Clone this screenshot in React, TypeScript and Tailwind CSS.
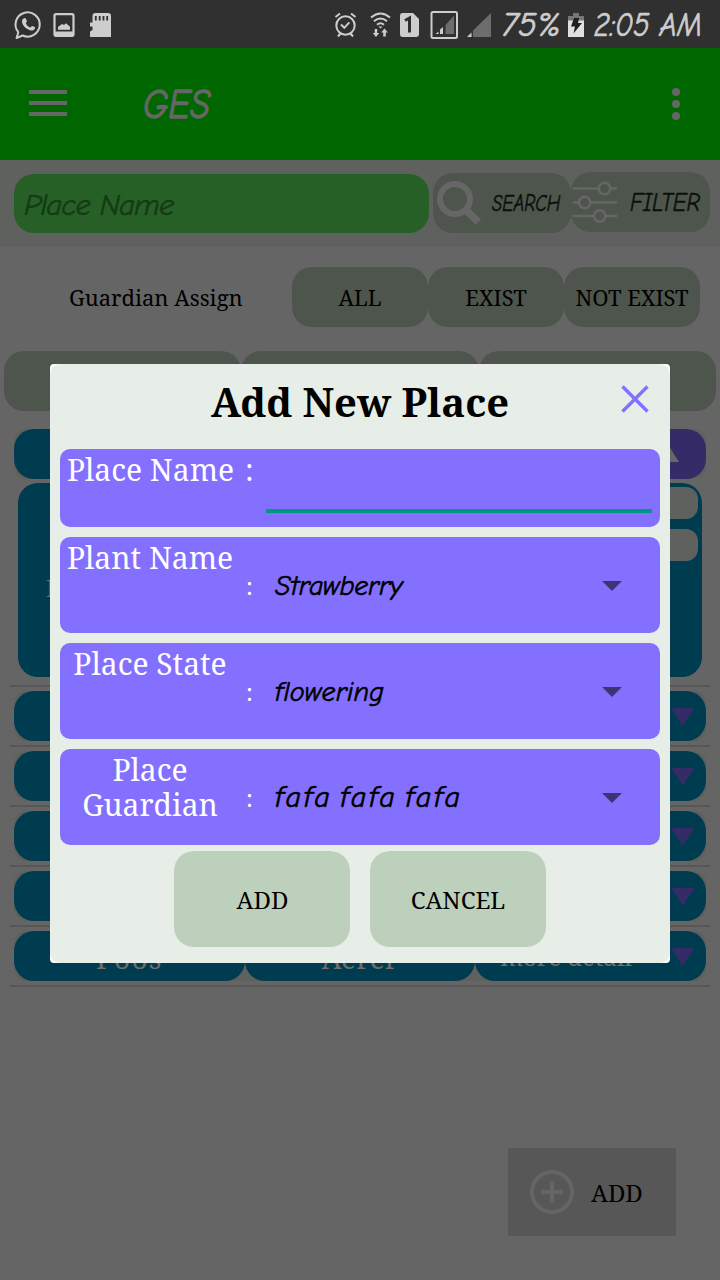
import type { ReactNode } from 'react';

const HAND = "font-['Comic_Neue','Lato',cursive] italic whitespace-nowrap";

function StatusBar() {
  return (
    <div className="flex h-12 shrink-0 items-center bg-[#303030] text-[#cdcdcd]">
      <svg width="118" height="48" viewBox="0 0 118 48" fill="none">
        <path d="M16.6 38 L18.3 32.2 A12.1 12.1 0 1 1 22.6 35.5 Z" stroke="currentColor" strokeWidth="2" strokeLinejoin="round" />
        <path d="M23.6 18.5c1.2-.9 1.9-.6 2.4.6l.9 2c.3.8-1.1 1.7-1 2.3.9 2 2.3 3.2 4.2 4 .8.1 1.4-1.7 2.2-1.5l2.3 1.1c.7.4.6 1 .2 1.8-.9 1.7-2.8 2.1-4.8 1.5-4.4-1.5-7.7-5.200-8-8.500 0-1.500.5-2.600 1.600-3.300Z" fill="currentColor" />
        <rect x="54.500" y="14.200" width="19" height="21.600" rx="1.500" stroke="currentColor" strokeWidth="2.200" />
        <path d="M54 31.500h20v4.500h-20zM58 29.800v-2.800l4-3 2 1 2-1.800 4 3.500v3.100z" fill="currentColor" />
        <path d="M92.500 16q0-3 3-3H108q3 0 3 3v21H90v-5.500l2.500-1.500v-3.500H90V22.500h2.500z" fill="currentColor" />
        <path d="M95.800 16v4.500M99.700 16v4.500M103.500 16v4.500M107.200 16v4.500" stroke="#303030" strokeWidth="1.800" />
      </svg>
      <svg className="ml-[212px]" width="170" height="48" viewBox="330 0 170 48" fill="none">
        <circle cx="345.500" cy="25.500" r="9.200" stroke="currentColor" strokeWidth="2" />
        <path d="m341 24.500 3.300 3.300 5-5.500M335.500 17l4.500-3.500M355.500 17 351 13.500M340.500 33.500 338 36.500M350.500 33.500l2.500 3" stroke="currentColor" strokeWidth="2" />
        <path d="M371 17.500q9.500-8 19 0M374 21.200q6.500-5.500 13 0M377 24.800q3.500-3 7 0" stroke="currentColor" strokeWidth="2" />
        <path d="M378.500 26.500h4l-2 2zM374.700 29h2.500v4h2l-3.200 4-3.300-4h2zM383.200 36.500h2.600v-4h2l-3.300-4-3.300 4h2z" fill="currentColor" />
        <path d="M402.500 13H413l6 6v15q0 3-3 3H402.500q-2.500 0-2.500-3V16q0-3 2.500-3Z" fill="currentColor" />
        <path d="M405 20.500 409.500 18v14.500" stroke="#303030" strokeWidth="3" />
        <rect x="431.500" y="12" width="25.500" height="26" rx="1.500" stroke="currentColor" strokeWidth="2" />
        <path d="M445.500 34V25L454 15.500V34z" fill="#6d6d6d" />
        <path d="M435.500 34l3-2.500V34zM440 34v-4.500l3-2.500v7z" fill="currentColor" />
        <path d="M473 37V30.500L491 13V37z" fill="#6d6d6d" />
        <path d="M467 37l4.500-4.500V37z" fill="currentColor" />
      </svg>
      <div className="flex w-[68px] shrink-0 pl-0.5">
        <span className={`${HAND} pt-0.5 text-[34px] leading-[48px] [-webkit-text-stroke:0.7px]`}>75%</span>
      </div>
      <svg width="16" height="48" viewBox="0 0 16 48">
        <path d="M0 16h5v-3h6v3h5v6H0z" fill="#777" />
        <path d="M0 20.500h16V37H0z" fill="#e0e0e0" />
        <path d="M6 18h5l-1 5h4L5.500 33.500 7 26.500H3z" fill="#202020" />
      </svg>
      <span className={`${HAND} ml-[10px] origin-left scale-x-[0.88] pt-0.5 text-[34px] leading-[48px] [-webkit-text-stroke:0.7px]`}>2:05 AM</span>
    </div>
  );
}

function Header() {
  return (
    <div className="flex h-28 shrink-0 items-center bg-[#006600] pr-10 pl-[29px] text-[#666]">
      <div className="flex w-[38px] flex-col gap-[7px] pb-0.5">
        <i className="h-1 bg-[#666]" />
        <i className="h-1 bg-[#666]" />
        <i className="h-1 bg-[#666]" />
      </div>
      <span className={`${HAND} ml-[76px] origin-left scale-x-[0.83] text-[43px] leading-none [-webkit-text-stroke:1.4px]`}>GES</span>
      <div className="ml-auto flex flex-col gap-1">
        <i className="size-2 rounded-full bg-[#666]" />
        <i className="size-2 rounded-full bg-[#666]" />
        <i className="size-2 rounded-full bg-[#666]" />
      </div>
    </div>
  );
}

function SearchBar() {
  return (
    <div className="flex h-[87px] shrink-0 bg-[#5e615d] pl-[14px]">
      <div className="mt-[14px] flex h-[59px] w-[415px] items-center rounded-[20px] bg-[#266026] pt-[3px] pl-[10px] text-[#153a15]">
        <span className={`${HAND} text-[31px] tracking-[-0.9px] [-webkit-text-stroke:0.5px]`}>Place Name</span>
      </div>
      <div className="mt-[13px] ml-1 flex h-[60px] w-[138px] rounded-[20px] bg-[#4d554c]">
        <svg className="ml-1 shrink-0" width="45" height="60" viewBox="0 0 45 60" fill="none" stroke="#666">
          <circle cx="18" cy="26" r="15" strokeWidth="6" />
          <path d="m29 37 12.500 12" strokeWidth="7.500" />
        </svg>
        <span className={`${HAND} ml-[10px] w-0 origin-left scale-x-[0.79] text-[23.500px] leading-[61px] text-[#0a0f0a] [-webkit-text-stroke:0.5px]`}>SEARCH</span>
      </div>
      <div className="mt-3 flex h-[60px] w-[139px] rounded-[20px] bg-[#4d554c]">
        <svg className="ml-0.5 shrink-0" width="45" height="60" viewBox="0 0 45 60" fill="none" stroke="#666">
          <path d="M0 16.500h25M38 16.500h6M0 30.500h5M18 30.500h26M0 44h20M33 44h11" strokeWidth="2.500" />
          <circle cx="31.500" cy="16.500" r="5.700" strokeWidth="2.500" />
          <circle cx="11.700" cy="30.500" r="5.700" strokeWidth="2.500" />
          <circle cx="26.700" cy="44" r="5.700" strokeWidth="2.500" />
        </svg>
        <span className={`${HAND} ml-3 w-0 origin-left scale-x-[0.87] text-[26px] leading-[62px] text-[#0a0f0a] [-webkit-text-stroke:0.5px]`}>FILTER</span>
      </div>
    </div>
  );
}

function Pill({ children }: { children?: ReactNode }) {
  return (
    <div className="flex h-[60px] flex-1 items-center justify-center rounded-[20px] bg-[#4d554c] text-[22px] whitespace-nowrap text-black">
      {children}
    </div>
  );
}

function Cells({ names, open }: { names: string[]; open?: boolean }) {
  return (
    <div className="mx-[14px] grid h-[50px] shrink-0 grid-cols-3 rounded-xl bg-[#5f615e] text-[#716d6c]">
      <div className="flex items-center justify-center rounded-[20px] bg-[#003c50] pt-1 text-[28px] tracking-[1.2px]">{names[0]}</div>
      <div className="flex items-center justify-center rounded-[20px] bg-[#003c50] pt-1 text-[28px] tracking-[0.2px]">{names[1]}</div>
      <div className={`flex items-center rounded-[20px] pl-[25px] text-[24px] ${open ? 'bg-[#352b66]' : 'bg-[#003c50]'}`}>
        <span className="pt-0.5 whitespace-nowrap">{names[2]}</span>
        <svg className="mr-[11px] ml-auto shrink-0 overflow-visible" width="24" height="50" viewBox="0 0 24 50">
          {open ? <path d="M-16 33 -4 14 8 33z" fill="#666" /> : <path d="M0 17H23.500L11.800 34.500z" fill="#352b66" />}
        </svg>
      </div>
    </div>
  );
}

function Row({ names }: { names: string[] }) {
  return (
    <div className="flex h-[60px] shrink-0 flex-col pt-1">
      <Cells names={names} />
      <div className="mx-[10px] mt-1 h-0.5 shrink-0 bg-[#575757]" />
    </div>
  );
}

function SelectField({ label, value, className }: { label: string; value: string; className: string }) {
  return (
    <div className="mt-[10px] flex h-24 shrink-0 rounded-[10px] bg-[#8470ff]">
      <div className="w-[180px] shrink-0 px-1.5 pt-[3px] text-center text-[30px] leading-[35px] text-white">{label}</div>
      <span className="w-[35px] shrink-0 pl-1.5 text-[24px] leading-[98px] text-white">:</span>
      <span className={`${HAND} leading-[98px] text-black [-webkit-text-stroke:0.6px] ${className}`}>{value}</span>
      <svg className="mt-11 mr-[38px] ml-auto" width="20" height="10" viewBox="0 0 20 10">
        <path d="M0 0h20L10 10z" fill="#3e3473" />
      </svg>
    </div>
  );
}

function AddPlaceDialog() {
  return (
    <div className="absolute top-[364px] left-[50px] h-[599px] w-[620px] overflow-hidden rounded bg-white">
      <div className="flex h-full flex-col rounded-[10px] bg-[#e7eee7] px-[10px]">
        <div className="flex h-[85px] shrink-0 items-start justify-between">
          <div className="w-[39px]" />
          <h1 className="pt-[13px] text-[40px] leading-[50px] font-bold text-black">Add New Place</h1>
          <svg className="mt-[21px] mr-[11px]" width="28" height="28" viewBox="0 0 28 28">
            <path d="M1.500 1.500l25 25M26.500 1.500l-25 25" stroke="#8470ff" strokeWidth="3.400" />
          </svg>
        </div>
        <div className="flex h-[78px] shrink-0 rounded-[10px] bg-[#8470ff] text-[30px] leading-[42px] whitespace-nowrap text-white">
          <div className="w-[180px] shrink-0 pl-px text-center">Place Name</div>
          <span className="w-[26px] shrink-0 pl-[5px]">:</span>
          <div className="mt-[60px] mr-2 h-1 flex-1 bg-[#009688]" />
        </div>
        <SelectField label="Plant Name" value="Strawberry" className="text-[28px] tracking-[-0.2px]" />
        <SelectField label="Place State" value="flowering" className="text-[28px] tracking-[0.2px]" />
        <SelectField label="Place Guardian" value="fafa fafa fafa" className="text-[30px] tracking-[2.8px] [word-spacing:-5px]" />
        <div className="mt-1.5 flex justify-center gap-5 text-[24px] text-black">
          <button className="h-24 w-44 rounded-[20px] bg-[#bdd0bc] pt-0.5 pl-px">ADD</button>
          <button className="h-24 w-44 rounded-[20px] bg-[#bdd0bc] pt-0.5">CANCEL</button>
        </div>
      </div>
    </div>
  );
}

export default function App() {
  return (
    <div className="relative flex h-[1280px] w-[720px] flex-col overflow-hidden bg-[#656565] font-['Noto_Serif','DejaVu_Serif',serif]">
      <StatusBar />
      <Header />
      <SearchBar />
      <div className="mt-5 flex shrink-0 pr-5">
        <div className="w-[292px] pr-5 pl-[69px] text-[22px] leading-[60px] whitespace-nowrap text-black">Guardian Assign</div>
        <Pill>ALL</Pill>
        <Pill>EXIST</Pill>
        <Pill>NOT EXIST</Pill>
      </div>
      <div className="mx-1 mt-6 mb-[18px] flex shrink-0">
        <Pill />
        <Pill />
        <Pill />
      </div>
      <Cells names={['', '', '']} open />
      <div className="mx-[18px] mt-1 flex h-[194px] shrink-0 justify-between rounded-[20px] bg-[#003c50] pr-1 pl-7">
        <span className="pt-[88px] text-[24px] leading-[34px] text-[#716d6c]">P</span>
        <div className="mt-1 flex w-[200px] flex-col gap-[10px]">
          <div className="h-8 rounded-xl bg-[#5e615d]" />
          <div className="h-8 rounded-xl bg-[#5e615d]" />
        </div>
      </div>
      <div className="mx-[10px] mt-2 h-0.5 shrink-0 bg-[#575757]" />
      <Row names={['', '', '']} />
      <Row names={['', '', '']} />
      <Row names={['', '', '']} />
      <Row names={['', '', '']} />
      <Row names={['Poos', 'Aerer', 'more detail']} />
      <div className="mt-auto mr-11 mb-11 flex h-[88px] w-[168px] shrink-0 items-center self-end rounded-[3px] bg-[#575757] pl-[22px]">
        <svg width="44" height="44" viewBox="0 0 44 44" fill="none" stroke="#656565" strokeWidth="4">
          <circle cx="22" cy="22" r="20" />
          <path d="M22 11v22M11 22h22" />
        </svg>
        <span className="ml-[17px] pt-0.5 text-[24px] text-black">ADD</span>
      </div>
      <AddPlaceDialog />
    </div>
  );
}
